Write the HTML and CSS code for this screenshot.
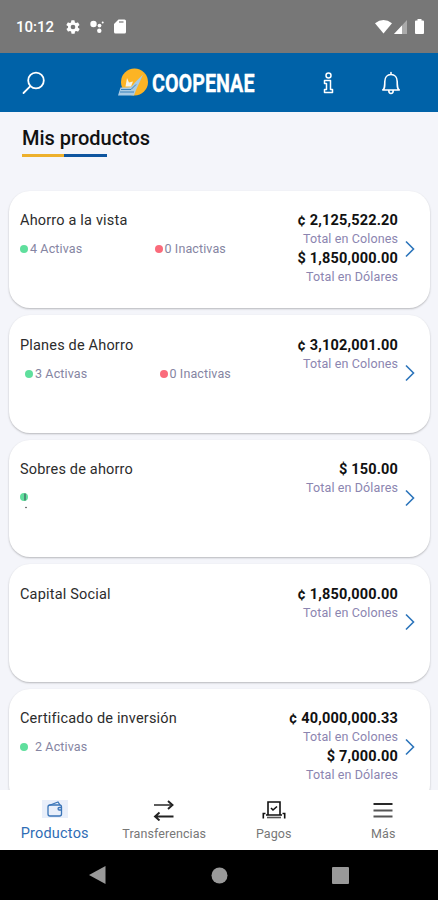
FILE: index.html
```html
<!DOCTYPE html>
<html lang="es">
<head>
  <meta charset="UTF-8">
  <title>Mis productos</title>
  <link rel="stylesheet" href="styles.css">
</head>
<body>

  <div class="status-bar">
    <span class="clock">10:12</span>
    <svg class="gear" width="16" height="16" viewBox="0 0 24 24"><path fill="#fff" fill-rule="evenodd" d="M19.4 13a7.500 7.500 0 0 0 0-2l2.100-1.600a.5.5 0 0 0 .1-.7l-2-3.400a.5.5 0 0 0-.6-.2l-2.500 1a7.300 7.300 0 0 0-1.700-1l-.4-2.600a.5.500 0 0 0-.5-.5h-4a.5.500 0 0 0-.5.5l-.4 2.600a7.700 7.700 0 0 0-1.700 1l-2.500-1a.5.500 0 0 0-.6.2l-2 3.400a.5.500 0 0 0 .1.700L4.600 11a7.900 7.900 0 0 0 0 2l-2.100 1.600a.5.500 0 0 0-.1.700l2 3.400c.1.200.4.300.6.200l2.500-1a7.300 7.300 0 0 0 1.700 1l.4 2.600c0 .3.200.5.500.5h4c.3 0 .5-.2.500-.5l.4-2.600a7.700 7.700 0 0 0 1.700-1l2.500 1c.2.100.5 0 .6-.2l2-3.400a.5.500 0 0 0-.1-.7zM12 15.500a3.500 3.500 0 1 1 0-7 3.500 3.500 0 0 1 0 7z"/></svg>
    <svg class="assistant" width="14" height="14" viewBox="0 0 14 14" fill="#fff"><circle cx="3.500" cy="4" r="3.200"/><circle cx="9.500" cy="5.600" r="1.900"/><circle cx="9.300" cy="10.700" r="2.200"/><circle cx="12.700" cy="2.500" r="1"/></svg>
    <svg class="sd" width="12" height="15" viewBox="0 0 12 15"><path fill="#fff" d="M4.500.5H10.500a1.500 1.500 0 0 1 1.500 1.500v11a1.500 1.500 0 0 1-1.500 1.500h-9A1.500 1.500 0 0 1 0 13V5z"/><path stroke="#777" stroke-width="1.200" d="M5 3h4.500"/></svg>
    <div class="signals">
      <svg width="17" height="14" viewBox="0 0 17 14"><path fill="#fff" d="M0 3.200Q8.500-3 17 3.200L8.500 13.500z"/></svg>
      <svg width="13" height="14" viewBox="0 0 13 14"><path fill="#aaa" d="M13 0v14H0z"/><path fill="#fff" d="M8 5.400V14H0z"/></svg>
      <svg class="battery" width="9" height="15" viewBox="0 0 9 15"><path fill="#fff" d="M2.500 1.500V0h4v1.500H8a1 1 0 0 1 1 1V14a1 1 0 0 1-1 1H1a1 1 0 0 1-1-1V2.500a1 1 0 0 1 1-1z"/></svg>
    </div>
  </div>

  <header class="app-bar">
    <svg class="search" width="24" height="24" viewBox="0 0 24 24" fill="none" stroke="#fff" stroke-width="1.800" stroke-linecap="round"><circle cx="14" cy="9.500" r="7.800"/><path d="M8.400 15.200 1.500 22"/></svg>
    <div class="brand">
      <svg class="logo" width="140" height="40" viewBox="0 -5 140 40">
        <circle cx="17.500" cy="14" r="13.500" fill="#fcb424"/>
        <path fill="#a9cbe4" d="M1 27.500 3.500 19.500H10c4 0 6-2 8-5l8-8-3.500 8L19 22l-2 5.500z"/>
        <path fill="#f4f5ea" d="M10 10l2 4.500 4-1-2 5H8.500z"/>
        <path fill="none" stroke="#3982bb" stroke-width="1" d="M3 24h14M4 21.500h10l5-5"/>
        <text class="brand-text" x="35" y="24" textLength="102.500" lengthAdjust="spacingAndGlyphs">COOPENAE</text>
      </svg>
    </div>
    <svg class="info" width="11" height="22" viewBox="0 0 11 22" fill="none" stroke="#fff" stroke-width="1.500" stroke-linejoin="round"><circle cx="5.500" cy="3.500" r="2.500"/><path d="M1.500 8.500h6v9h2v3h-8v-3h2v-6h-2z"/></svg>
    <svg class="bell" width="20" height="24" viewBox="0 0 20 24" fill="none" stroke="#fff" stroke-width="1.600" stroke-linejoin="round" stroke-linecap="round"><path d="M1.800 19c2-1.500 2-3.500 2-8.500 0-4 2.500-7 6.200-7s6.200 3 6.200 7c0 5 0 7 2 8.500zM10 3.500V1.500M7.800 19.500c0 4 4.400 4 4.400 0"/></svg>
  </header>

  <main class="content">
    <h1>Mis productos</h1>
    <div class="underline"></div>

    <div class="card">
      <div class="left">
        <h2>Ahorro a la vista</h2>
        <div class="counts"><span class="active">4 Activas</span><span class="inactive">0 Inactivas</span></div>
      </div>
      <div class="totals">
        <b>¢ 2,125,522.20</b><span>Total en Colones</span>
        <b>$ 1,850,000.00</b><span>Total en Dólares</span>
      </div>
      <svg class="chevron" width="10" height="18" viewBox="0 0 10 18"><path d="M1 1.500 8.500 9 1 16.500"/></svg>
    </div>

    <div class="card">
      <div class="left">
        <h2>Planes de Ahorro</h2>
        <div class="counts indent"><span class="active">3 Activas</span><span class="inactive">0 Inactivas</span></div>
      </div>
      <div class="totals">
        <b>¢ 3,102,001.00</b><span>Total en Colones</span>
      </div>
      <svg class="chevron" width="10" height="18" viewBox="0 0 10 18"><path d="M1 1.500 8.500 9 1 16.500"/></svg>
    </div>

    <div class="card">
      <div class="left">
        <h2>Sobres de ahorro</h2>
        <svg class="clipped" width="10" height="20" viewBox="0 0 10 20"><circle cx="4" cy="6" r="4" fill="#5fdf9d"/><path d="M5 2.500v7" stroke="#456b66" stroke-width="1.400"/><circle cx="6" cy="16.500" r=".8" fill="#444"/></svg>
      </div>
      <div class="totals">
        <b>$ 150.00</b><span>Total en Dólares</span>
      </div>
      <svg class="chevron" width="10" height="18" viewBox="0 0 10 18"><path d="M1 1.500 8.500 9 1 16.500"/></svg>
    </div>

    <div class="card">
      <div class="left">
        <h2>Capital Social</h2>
      </div>
      <div class="totals">
        <b>¢ 1,850,000.00</b><span>Total en Colones</span>
      </div>
      <svg class="chevron" width="10" height="18" viewBox="0 0 10 18"><path d="M1 1.500 8.500 9 1 16.500"/></svg>
    </div>

    <div class="card">
      <div class="left">
        <h2>Certificado de inversión</h2>
        <div class="counts spaced"><span class="active">2 Activas</span></div>
      </div>
      <div class="totals">
        <b>¢ 40,000,000.33</b><span>Total en Colones</span>
        <b>$ 7,000.00</b><span>Total en Dólares</span>
      </div>
      <svg class="chevron" width="10" height="18" viewBox="0 0 10 18"><path d="M1 1.500 8.500 9 1 16.500"/></svg>
    </div>
  </main>

  <nav class="tabs">
    <a class="tab selected">
      <svg width="26" height="22" viewBox="0 0 26 22" fill="none" stroke="#3b75b8" stroke-width="1.300"><path fill="#e9effa" stroke="none" d="M0 1h26v18H0z"/><rect x="6" y="6" width="13.500" height="11" rx="2"/><path d="M7 6.500 16 3l2 3M19.500 8.500h-2.200a1 1 0 0 0 0 2.500h2.200"/></svg>
      <span>Productos</span>
    </a>
    <a class="tab">
      <svg width="22" height="22" viewBox="0 0 22 22" fill="none" stroke="#222" stroke-width="1.900"><path stroke="#555" d="M1 6h17"/><path d="M15 2l4.500 4-4.500 4M20.500 17.500H3M6.500 13.500l-4.500 4 4.500 4"/></svg>
      <span>Transferencias</span>
    </a>
    <a class="tab">
      <svg width="24" height="22" viewBox="0 0 24 22" fill="none" stroke="#111" stroke-width="1.600"><path d="M6 15.500V3h12v12.500M4 16h16M9 9l2 2 4-3.500"/><path stroke="#555" d="M5 18.500h14"/><path d="M3.500 14.500H1.300v5M20.500 14.500h2.200v5"/></svg>
      <span>Pagos</span>
    </a>
    <a class="tab">
      <svg width="22" height="22" viewBox="0 0 22 22" fill="none" stroke="#555" stroke-width="1.800"><path stroke="#111" d="M1.500 5h19"/><path d="M1.500 11.500h19M1.500 17.500h19"/></svg>
      <span>Más</span>
    </a>
  </nav>

  <div class="system-nav">
    <svg width="17" height="18" viewBox="0 0 17 18"><path fill="#999" d="M16.500 0v18L0 9z"/></svg>
    <svg width="17" height="17" viewBox="0 0 17 17"><circle cx="8.500" cy="8.500" r="8" fill="#999"/></svg>
    <svg width="17" height="17" viewBox="0 0 17 17"><rect width="17" height="17" rx="1" fill="#999"/></svg>
  </div>

</body>
</html>
```

FILE: styles.css
```css
* {
  box-sizing: border-box;
}

body {
  margin: 0;
  height: 900px;
  display: flex;
  flex-direction: column;
  overflow: hidden;
  background: #f4f5fa;
  font-family: Roboto, sans-serif;
}

svg {
  display: block;
  flex: none;
}

.status-bar {
  flex: none;
  height: 53px;
  padding: 0 14px 0 16px;
  display: flex;
  align-items: center;
  background: #777;
  color: #fff;
}

.clock {
  width: 48.500px;
  font-size: 15px;
  font-weight: 500;
}

.gear {
  margin-right: 9px;
}

.assistant {
  margin-right: 10px;
}

.signals {
  margin-left: auto;
  display: flex;
  align-items: center;
  gap: 2px;
}

.battery {
  margin-left: 6px;
}

.app-bar {
  flex: none;
  height: 59px;
  display: flex;
  align-items: center;
  padding-left: 22px;
  background: #0062a8;
}

.brand {
  margin-left: 71px;
}

.logo {
  overflow: visible;
}

.brand-text {
  font-family: Roboto, sans-serif;
  font-weight: 700;
  font-size: 26.500px;
  fill: #fff;
  stroke: #fff;
  stroke-width: 0.3px;
}

.info {
  margin-left: 66px;
}

.bell {
  margin-left: 47px;
}

.content {
  flex: 1;
  min-height: 0;
  padding: 13px 8px 0 9px;
  overflow: hidden;
}

h1 {
  margin: 0 0 3px 13px;
  font-size: 20px;
  line-height: 26px;
  font-weight: 500;
  color: #111;
}

.underline {
  width: 85px;
  height: 3px;
  margin: 0 0 33.500px 13px;
  background: linear-gradient(to right, #edb02c 50%, #0e559f 50%);
}

.card {
  display: flex;
  height: 117.600px;
  margin-bottom: 7px;
  padding: 20.500px 15px 0 11px;
  background: #fff;
  border-radius: 21px;
  box-shadow: 0 1px 2px rgba(0, 0, 0, 0.25);
}

.left {
  flex: 1;
}

h2 {
  margin: 0;
  font-size: 14.500px;
  line-height: 20px;
  font-weight: 400;
  letter-spacing: 0.18px;
  color: #2c2c2c;
}

.counts {
  display: flex;
  margin-top: 9px;
  font-size: 12.500px;
  line-height: 18px;
  letter-spacing: 0.12px;
  color: #8585a2;
}

.counts.indent {
  padding-left: 5px;
}

.counts span {
  width: 134.500px;
  display: flex;
  align-items: center;
  white-space: nowrap;
}

.counts span::before {
  content: "";
  width: 8px;
  height: 8px;
  margin-right: 2px;
  border-radius: 50%;
  background: #5fdf9d;
}

.counts .inactive {
  width: auto;
}

.counts .inactive::before {
  background: #fa6b7b;
}

.counts.spaced span::before {
  margin-right: 7px;
}

.clipped {
  margin-top: 11px;
}

.totals {
  display: flex;
  flex-direction: column;
  align-items: flex-end;
}

.totals b {
  font-size: 14.500px;
  line-height: 20px;
  font-weight: 700;
  letter-spacing: 0.17px;
  color: #111;
}

.totals span {
  font-size: 12.500px;
  line-height: 17.500px;
  letter-spacing: 0.12px;
  margin-top: -1px;
  margin-bottom: 1px;
  color: #8b85b0;
}

.chevron {
  margin: 28.500px 0 0 7px;
}

.chevron path {
  fill: none;
  stroke: #2c75bb;
  stroke-width: 1.600;
}

.tabs {
  flex: none;
  height: 60px;
  display: grid;
  grid-template-columns: repeat(4, 1fr);
  background: #fff;
}

.tab {
  display: flex;
  flex-direction: column;
  align-items: center;
  padding-top: 9px;
  font-size: 12.500px;
  line-height: 26px;
  letter-spacing: 0.1px;
  color: #777;
}

.tab.selected {
  font-size: 14.500px;
  letter-spacing: 0.2px;
  color: #2f6db5;
}

.system-nav {
  flex: none;
  height: 50px;
  display: flex;
  align-items: center;
  justify-content: center;
  gap: 104.500px;
  background: #000;
}
```
